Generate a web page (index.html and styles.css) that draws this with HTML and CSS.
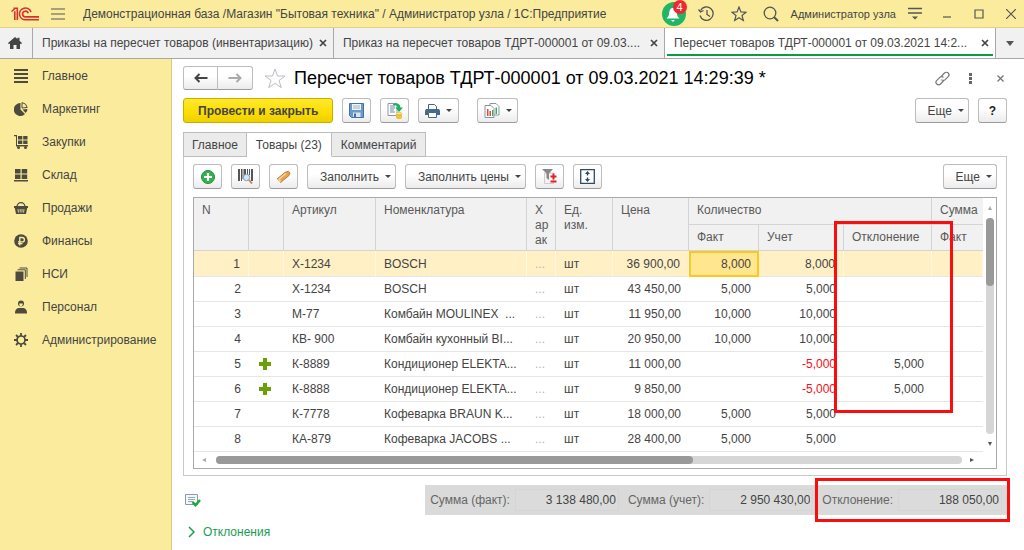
FILE: index.html
```
<!DOCTYPE html>
<html lang="ru">
<head>
    <meta charset="UTF-8">
    <meta name="viewport" content="width=device-width, initial-scale=1.0">
    <title>Пересчет товаров</title>
    <link rel="stylesheet" href="styles.css">
</head>
<body>
<header class="topbar">
    <svg class="logo" width="28" height="14" viewBox="0 0 28 14" fill="none" stroke="#d9302c" stroke-width="1.6">
        <path d="M.5 4.500L3.500 2M3.800 4.300V13M2.500 1.200H6.300V13"/>
        <path d="M20 5A5.900 5.900 0 1 0 14.800 12.800H28"/>
        <path d="M17.300 6.300A2.900 2.900 0 1 0 14.800 9.900H28"/>
    </svg>
    <button class="icon-btn" aria-label="Меню">
        <svg width="14" height="12" viewBox="0 0 14 12" stroke="#555" stroke-width="1.200"><path d="M0 1h14M0 6h14M0 11h14"/></svg>
    </button>
    <div class="app-title">Демонстрационная база /Магазин "Бытовая техника" / Администратор узла / 1С:Предприятие</div>
    <button class="icon-btn bell" aria-label="Уведомления">
        <svg width="24" height="24" viewBox="0 0 24 24"><circle cx="12" cy="12" r="12" fill="#22b565"/><path d="M11 6c-3 0-3.500 2.500-3.800 5-.3 2.500-1 4-2.700 5.500h13c-1.700-1.500-2.400-3-2.700-5.500-.3-2.500-.8-5-3.800-5z" fill="#fff"/><path d="M9 18h4l-2 2z" fill="#fff"/></svg>
        <span class="badge">4</span>
    </button>
    <button class="icon-btn history" aria-label="История">
        <svg width="17" height="16" viewBox="0 0 17 16" fill="none" stroke="#555" stroke-width="1.300"><path d="M2.500 4.500A6.700 6.700 0 1 1 2 9.500M9 4v4.500l3 2"/><path d="M.5 3.500l2 2.500 3-1.500"/></svg>
    </button>
    <button class="icon-btn fav" aria-label="Избранное">
        <svg width="16" height="16" viewBox="0 0 16 16" fill="none" stroke="#555" stroke-width="1.200"><path d="M8 1l1.900 4.900 5.100.3-4 3.300 1.300 5L8 11.700l-4.300 2.800 1.300-5-4-3.300 5.100-.3z"/></svg>
    </button>
    <button class="icon-btn search" aria-label="Поиск">
        <svg width="16" height="16" viewBox="0 0 16 16" fill="none" stroke="#555" stroke-width="1.300"><circle cx="7" cy="7" r="5.800"/><path d="M11 11l4 4" stroke-width="2"/></svg>
    </button>
    <a class="user" href="#">Администратор узла</a>
    <button class="icon-btn settings" aria-label="Настройки">
        <svg width="14" height="13" viewBox="0 0 14 13"><path d="M0 1.500h14M0 6h14" stroke="#555" stroke-width="1.300"/><path d="M4 9.500h6l-3 3z" fill="#555"/></svg>
    </button>
    <button class="icon-btn win-btn" aria-label="Свернуть">
        <svg width="10" height="10" viewBox="0 0 10 10" stroke="#555" stroke-width="1.200"><path d="M1 8h8"/></svg>
    </button>
    <button class="icon-btn win-btn" aria-label="Развернуть">
        <svg width="10" height="10" viewBox="0 0 10 10" fill="none" stroke="#555" stroke-width="1.200"><path d="M1 1h8v8H1z"/></svg>
    </button>
    <button class="icon-btn win-btn" aria-label="Закрыть">
        <svg width="10" height="10" viewBox="0 0 10 10" stroke="#555" stroke-width="1.200"><path d="M0 0l10 10M10 0L0 10"/></svg>
    </button>
</header>

<nav class="windows">
    <a class="home" href="#" aria-label="Начальная страница">
        <svg width="14" height="12" viewBox="0 0 14 12" fill="#444"><path d="M7 0L0 6l1 1.200 1-.8V12h3.500V8h3v4H12V6.400l1 .8L14 6l-2.500-2.200V.8h-2v1.300z"/></svg>
    </a>
    <div class="window">
        <a href="#">Приказы на пересчет товаров (инвентаризацию)</a>
        <button class="icon-btn" aria-label="Закрыть вкладку"><svg width="8" height="8" viewBox="0 0 8 8" stroke="#444" stroke-width="1.700"><path d="M1 1l6 6M7 1L1 7"/></svg></button>
    </div>
    <div class="window grow">
        <a href="#">Приказ на пересчет товаров ТДРТ-000001 от 09.03....</a>
        <button class="icon-btn" aria-label="Закрыть вкладку"><svg width="8" height="8" viewBox="0 0 8 8" stroke="#444" stroke-width="1.700"><path d="M1 1l6 6M7 1L1 7"/></svg></button>
    </div>
    <div class="window grow current">
        <a href="#">Пересчет товаров ТДРТ-000001 от 09.03.2021 14:2...</a>
        <button class="icon-btn" aria-label="Закрыть вкладку"><svg width="8" height="8" viewBox="0 0 8 8" stroke="#444" stroke-width="1.700"><path d="M1 1l6 6M7 1L1 7"/></svg></button>
    </div>
    <button class="icon-btn more-windows" aria-label="Все вкладки">
        <svg width="8" height="5" viewBox="0 0 8 5"><path d="M0 0h8L4 5z" fill="#555"/></svg>
    </button>
</nav>

<div class="layout">
    <!-- разделы -->
    <nav class="sidebar">
        <a href="#"><svg width="14" height="14" viewBox="0 0 14 14" stroke="#4d4b40" stroke-width="1.800"><path d="M0 1h14M0 5h14M0 9h14M0 13h14"/></svg>Главное</a>
        <a href="#"><svg width="14" height="14" viewBox="0 0 14 14" fill="#4d4b40"><path d="M6.500 1A6.500 6.500 0 1 0 11 12L6.500 7.500z"/><path d="M8 .6A6 6 0 0 1 13.200 5.500L8 6z" fill="none" stroke="#4d4b40"/><path d="M8.500 7.500l5-.6a6 6 0 0 1-1.800 4z"/></svg>Маркетинг</a>
        <a href="#"><svg width="14" height="14" viewBox="0 0 14 14" fill="#4d4b40"><path d="M0 0h3v10h11v1.500H2V1.200H0z"/><path d="M4 1h4.300v3.600H4zM9.200 1h4.300v3.600H9.200zM4 5.500h4.300V9H4zM9.200 5.500h4.300V9H9.200z"/><circle cx="4.500" cy="12.500" r="1.500"/><circle cx="11.500" cy="12.500" r="1.500"/></svg>Закупки</a>
        <a href="#"><svg width="14" height="14" viewBox="0 0 14 14" fill="#4d4b40"><path d="M1 1h5.500v4.500H1zM7.700 1h5.500v4.500H7.700zM1 6.500h5.500V11H1zM7.700 6.500h5.500V11H7.700zM0 12h14v1.500H0z"/></svg>Склад</a>
        <a href="#"><svg width="14" height="14" viewBox="0 0 14 14" fill="#4d4b40"><path d="M3 6a4 4.300 0 0 1 8 0" fill="none" stroke="#4d4b40" stroke-width="1.300"/><path d="M0 5h14v2h-.8L12 13H2L.8 7H0z"/><path d="M4 8l.5 3.500M6.200 8v3.500M8 8v3.500M10 8l-.5 3.500" stroke="#fbec9d" stroke-width=".8"/></svg>Продажи</a>
        <a href="#"><svg width="14" height="14" viewBox="0 0 14 14"><circle cx="7" cy="7" r="6.800" fill="#4d4b40"/><path d="M5.800 11.500V3.500h2.400a2.200 2.200 0 0 1 0 4.400H4M4 9.700h4.500" fill="none" stroke="#fbec9d" stroke-width="1.300"/></svg>Финансы</a>
        <a href="#"><svg width="14" height="14" viewBox="0 0 14 14"><path d="M1.500 4.500h8V14h-8z" fill="#4d4b40"/><path d="M3.500 2.800h7.800V12M5.500 1h7.500v9" fill="none" stroke="#4d4b40" stroke-width="1"/></svg>НСИ</a>
        <a href="#"><svg width="14" height="14" viewBox="0 0 14 14" fill="#4d4b40"><circle cx="7" cy="3.500" r="3"/><path d="M5.200 3.500h3.600c0 4-3.600 4-3.600 0z" fill="#fbec9d"/><path d="M1 13.500c0-4 1.500-5 3.500-5.500h5c2 .5 3.500 1.500 3.500 5.500z"/></svg>Персонал</a>
        <a href="#"><svg width="14" height="14" viewBox="0 0 14 14" fill="none" stroke="#4d4b40"><circle cx="7" cy="7" r="4" stroke-width="1.700"/><path d="M7 0v3M7 11v3M0 7h3M11 7h3M2 2l2 2M10 10l2 2M2 12l2-2M10 4l2-2" stroke-width="1.800"/></svg>Администрирование</a>
    </nav>

    <main class="content">
        <div class="heading">
            <div class="nav-buttons">
                <button class="btn" aria-label="Назад"><svg width="14" height="10" viewBox="0 0 14 10" fill="none" stroke="#444" stroke-width="2"><path d="M13.500 5H2M5.500 1L1.500 5l4 4"/></svg></button>
                <button class="btn" aria-label="Вперед"><svg width="14" height="10" viewBox="0 0 14 10" fill="none" stroke="#aaa" stroke-width="2"><path d="M.5 5H12M8.500 1l4 4-4 4"/></svg></button>
            </div>
            <button class="icon-btn star" aria-label="В избранное">
                <svg width="22" height="21" viewBox="0 0 22 21" fill="none" stroke="#b9bcc2" stroke-width="1"><path d="M11 1l2.500 7H21l-6 4.500 2.300 7.200L11 15.300l-6.300 4.400L7 12.500 1 8h7.500z"/></svg>
            </button>
            <h1>Пересчет товаров ТДРТ-000001 от 09.03.2021 14:29:39 *</h1>
            <button class="icon-btn" aria-label="Ссылка">
                <svg width="15" height="15" viewBox="0 0 15 15" fill="none" stroke="#777" stroke-width="1.200"><path d="M6.500 5l3-3a2.600 2.600 0 0 1 3.700 3.700l-3 3a2.600 2.600 0 0 1-3.700 0"/><path d="M8.500 10l-3 3a2.600 2.600 0 0 1-3.700-3.700l3-3a2.600 2.600 0 0 1 3.700 0"/></svg>
            </button>
            <button class="icon-btn" aria-label="Еще"><svg width="3" height="11" viewBox="0 0 3 11" fill="#666"><path d="M0 0h3v3H0zM0 4h3v3H0zM0 8h3v3H0z"/></svg></button>
            <button class="icon-btn close" aria-label="Закрыть"><svg width="7" height="7" viewBox="0 0 7 7" stroke="#777" stroke-width="1.300"><path d="M.5 .5l6 6M6.500 .5l-6 6"/></svg></button>
        </div>

        <div class="toolbar">
            <button class="btn primary">Провести и закрыть</button>
            <button class="btn icon" aria-label="Записать">
                <svg width="15" height="15" viewBox="0 0 15 15"><path d="M.5.5h14v14h-12l-2-2z" fill="#6c9bcb" stroke="#44719f"/><path d="M3 1h9v6H3z" fill="#eef4fa"/><path d="M4 3h7M4 5h7" stroke="#9bb4cc"/><path d="M4 9.500h7.500V14H4z" fill="#dbe4ec"/><path d="M5 10.500h2V14H5z" fill="#3f6f9f"/></svg>
            </button>
            <button class="btn icon" aria-label="Провести">
                <svg width="16" height="16" viewBox="0 0 16 16"><path d="M1 .5h9v12H1z" fill="#fff" stroke="#8999a8"/><path d="M3 3h5M3 5h5M3 7h4M3 9h5" stroke="#70879c"/><path d="M6 1c5-1.500 7 0 7.500 3.500H16L12 9 8.500 4.500h2C10 2.500 9 2 6 2.500z" fill="#19b35b"/><path d="M9 10.500v4c0 2 6 2 6 0v-4z" fill="#edc33b"/><ellipse cx="12" cy="10.500" rx="3" ry="1.200" fill="#ffe98e" stroke="#cfa128" stroke-width=".5"/></svg>
            </button>
            <button class="btn icon menu" aria-label="Печать">
                <svg width="15" height="14" viewBox="0 0 15 14"><path d="M3.500 5V.5h6l2 2V5" fill="#fff" stroke="#4a6684"/><path d="M1 5h13l1 1.500V11H0V6.500z" fill="#47698e"/><path d="M3.500 8.500h8v5h-8z" fill="#fff" stroke="#4a6684"/></svg>
            </button>
            <button class="btn icon menu reports" aria-label="Отчеты">
                <svg width="16" height="15" viewBox="0 0 16 15"><path d="M6 .5h6l3 3V12H6z" fill="#fff" stroke="#8a959f"/><path d="M1 2.500h6l3 3v9H1z" fill="#fff" stroke="#8a959f"/><path d="M3 13V6h1.500v7z" fill="#d94b3f"/><path d="M5.500 13V8H7v5z" fill="#d94b3f"/><path d="M8 13V7h1.300v6zM11.500 11V4.500H13V11z" fill="#3ca85c"/></svg>
            </button>
            <span class="spacer"></span>
            <button class="btn menu">Еще</button>
            <button class="btn icon help">?</button>
        </div>

        <div class="tabs" role="tablist">
            <button role="tab">Главное</button>
            <button role="tab" class="active" aria-selected="true">Товары (23)</button>
            <button role="tab">Комментарий</button>
        </div>

        <section class="panel">
            <div class="toolbar">
                <button class="btn icon" aria-label="Добавить">
                    <svg width="14" height="14" viewBox="0 0 14 14"><circle cx="7" cy="7" r="6.500" fill="#35b04f" stroke="#258c3c"/><path d="M7 3v8M3 7h8" stroke="#fff" stroke-width="2.200"/></svg>
                </button>
                <button class="btn icon" aria-label="Поиск по штрихкоду">
                    <svg width="15" height="15" viewBox="0 0 15 15"><path d="M1 0v12M7 0v8M14 0v12" stroke="#555" stroke-width="2"/><path d="M3.500 0v12M5 0v10M9.500 0v6M11.500 0v6" stroke="#555"/><circle cx="8.500" cy="8.500" r="3.200" fill="#d5e6f5" stroke="#7e9ab4"/><path d="M11 11l3 3.500" stroke="#c9804c" stroke-width="1.800"/></svg>
                </button>
                <button class="btn icon" aria-label="Терминал сбора данных">
                    <svg width="15" height="13" viewBox="0 0 15 13"><path d="M1 9l8-6.500 3.500-1.300L14 3l-1 2.500-8.500 7z" fill="#e2a453" stroke="#bd7c30"/><path d="M3 9l7-5.500" stroke="#f7d7a0" stroke-width="1.500"/><path d="M.5 8.500L4 12.500l1-2.500z" fill="#f5dba8"/></svg>
                </button>
                <button class="btn menu">Заполнить</button>
                <button class="btn menu">Заполнить цены</button>
                <button class="btn icon" aria-label="Отбор">
                    <svg width="15" height="15" viewBox="0 0 15 15"><path d="M2.500 4h9v10.500h-9z" fill="#f3f3f3" stroke="#ccc"/><path d="M0 0h11L7 4.500V11L4.500 9V4.500z" fill="#888"/><path d="M11.500 4.500v6M8.500 7.500h6M8.500 12.500h6" stroke="#e3202a" stroke-width="2"/></svg>
                </button>
                <button class="btn icon" aria-label="Высота строк">
                    <svg width="15" height="15" viewBox="0 0 15 15"><path d="M.7.7h13.600v13.600H.7z" fill="#fff" stroke="#33495c" stroke-width="1.300"/><path d="M7.500 2L10 5H8.200v1.500H6.800V5H5zM7.500 13L10 10H8.200V8.500H6.800V10H5z" fill="#33495c"/></svg>
                </button>
                <span class="spacer"></span>
                <button class="btn menu">Еще</button>
            </div>

            <div class="grid">
                <table class="goods">
                    <colgroup>
                        <col class="w-n"><col class="w-mark"><col class="w-art"><col><col class="w-char"><col class="w-unit">
                        <col class="w-price"><col class="w-fact"><col class="w-acc"><col class="w-dev"><col class="w-sum">
                    </colgroup>
                    <thead>
                    <tr>
                        <th rowspan="2">N</th>
                        <th rowspan="2"></th>
                        <th rowspan="2">Артикул</th>
                        <th rowspan="2">Номенклатура</th>
                        <th rowspan="2">Х<br>ар<br>ак</th>
                        <th rowspan="2">Ед.<br>изм.</th>
                        <th rowspan="2">Цена</th>
                        <th colspan="3">Количество</th>
                        <th>Сумма</th>
                    </tr>
                    <tr>
                        <th>Факт</th>
                        <th>Учет</th>
                        <th>Отклонение</th>
                        <th>Факт</th>
                    </tr>
                    </thead>
                    <tbody>
                    <tr class="selected"><td class="num">1</td><td></td><td>X-1234</td><td>BOSCH</td><td class="dots">...</td><td>шт</td><td class="num">36 900,00</td><td class="num focus">8,000</td><td class="num">8,000</td><td class="num"></td><td></td></tr>
                    <tr><td class="num">2</td><td></td><td>X-1234</td><td>BOSCH</td><td class="dots">...</td><td>шт</td><td class="num">43 450,00</td><td class="num">5,000</td><td class="num">5,000</td><td class="num"></td><td></td></tr>
                    <tr><td class="num">3</td><td></td><td>М-77</td><td>Комбайн MOULINEX &nbsp;...</td><td class="dots">...</td><td>шт</td><td class="num">11 950,00</td><td class="num">10,000</td><td class="num">10,000</td><td class="num"></td><td></td></tr>
                    <tr><td class="num">4</td><td></td><td>КВ- 900</td><td>Комбайн кухонный BI...</td><td class="dots">...</td><td>шт</td><td class="num">20 950,00</td><td class="num">10,000</td><td class="num">10,000</td><td class="num"></td><td></td></tr>
                    <tr><td class="num">5</td><td class="mark"><svg width="14" height="14" viewBox="0 0 14 14"><path d="M7 1v12M1 7h12" stroke="#6aa10a" stroke-width="4"/></svg></td><td>К-8889</td><td>Кондиционер ELEKTA...</td><td class="dots">...</td><td>шт</td><td class="num">11 000,00</td><td></td><td class="num minus">-5,000</td><td class="num">5,000</td><td></td></tr>
                    <tr><td class="num">6</td><td class="mark"><svg width="14" height="14" viewBox="0 0 14 14"><path d="M7 1v12M1 7h12" stroke="#6aa10a" stroke-width="4"/></svg></td><td>К-8888</td><td>Кондиционер ELEKTA...</td><td class="dots">...</td><td>шт</td><td class="num">9 850,00</td><td></td><td class="num minus">-5,000</td><td class="num">5,000</td><td></td></tr>
                    <tr><td class="num">7</td><td></td><td>К-7778</td><td>Кофеварка BRAUN K...</td><td class="dots">...</td><td>шт</td><td class="num">18 000,00</td><td class="num">5,000</td><td class="num">5,000</td><td class="num"></td><td></td></tr>
                    <tr><td class="num">8</td><td></td><td>КА-879</td><td>Кофеварка JACOBS ...</td><td class="dots">...</td><td>шт</td><td class="num">28 400,00</td><td class="num">5,000</td><td class="num">5,000</td><td class="num"></td><td></td></tr>
                    </tbody>
                </table>
                <div class="vscroll">
                    <svg width="4" height="4" viewBox="0 0 4 4"><path d="M0 4h4L2 0z" fill="#aaa"/></svg>
                    <div class="track"><div class="thumb"></div></div>
                    <svg width="4" height="4" viewBox="0 0 4 4"><path d="M0 0h4L2 4z" fill="#555"/></svg>
                </div>
                <div class="hscroll">
                    <svg width="4" height="4" viewBox="0 0 4 4"><path d="M4 0v4L0 2z" fill="#aaa"/></svg>
                    <div class="track"><div class="thumb"></div></div>
                    <svg width="4" height="4" viewBox="0 0 4 4"><path d="M0 0v4l4-2z" fill="#555"/></svg>
                </div>
                <!-- рамка вокруг колонки отклонений -->
                <div class="callout callout-column"></div>
            </div>
        </section>

        <div class="footer">
            <button class="icon-btn" aria-label="Состояние документа">
                <svg width="16" height="13" viewBox="0 0 16 13"><path d="M.5.5h12v10H.5z" fill="#f4f7fa" stroke="#8b9bab"/><path d="M3 3.500h7M3 5.500h7M3 7.500h5" stroke="#9aa9b7"/><path d="M7.500 8l3 3.200L15 6" fill="none" stroke="#19a83c" stroke-width="2.500"/></svg>
            </button>
            <div class="totals">
                <label for="sum-fact">Сумма (факт):</label>
                <input id="sum-fact" type="text" value="3 138 480,00" readonly>
                <label for="sum-acc">Сумма (учет):</label>
                <input id="sum-acc" type="text" value="2 950 430,00" readonly>
                <label for="sum-dev">Отклонение:</label>
                <input id="sum-dev" type="text" value="188 050,00" readonly>
                <div class="callout callout-total"></div>
            </div>
        </div>

        <a class="expand" href="#">
            <svg width="7" height="12" viewBox="0 0 7 12" fill="none" stroke="#1a9c52" stroke-width="1.500"><path d="M1 1l5 5-5 5"/></svg>
            Отклонения
        </a>
    </main>
</div>
</body>
</html>
```
FILE: styles.css
```
* {
    box-sizing: border-box;
    margin: 0;
    padding: 0;
}

body {
    display: flex;
    flex-direction: column;
    min-height: 100vh;
    background: #fff;
    color: #444;
    font: 12px/16px "Liberation Sans", Arial, sans-serif;
}

a {
    color: inherit;
    text-decoration: none;
}

button,
input {
    font: inherit;
    color: inherit;
}

svg {
    display: block;
    flex: none;
}

.icon-btn {
    display: flex;
    flex: none;
    align-items: center;
    justify-content: center;
    border: 0;
    background: none;
}

.spacer {
    flex: 1;
}

/* верхняя панель */
.topbar {
    display: flex;
    align-items: center;
    height: 28px;
    padding: 0 1px 0 11px;
    border-bottom: 1px solid #e0d08a;
    background: #fbec9d;
}

.topbar .logo {
    margin-right: 12px;
}

.app-title {
    flex: 1;
    min-width: 0;
    margin-left: 18px;
    overflow: hidden;
    white-space: nowrap;
}

.bell {
    position: relative;
    height: 27px;
    margin-right: 12px;
}

.badge {
    position: absolute;
    top: 0;
    right: -1px;
    width: 14px;
    height: 14px;
    border-radius: 50%;
    background: #f0282d;
    color: #fff;
    font-size: 11px;
    line-height: 14px;
}

.history,
.fav {
    margin-right: 16px;
}

.search {
    margin-right: 12px;
}

.user {
    margin-right: 12px;
    font-size: 11px;
}

.settings {
    margin-right: 9px;
}

.win-btn {
    width: 32px;
}

.win-btn:last-child {
    width: 24px;
    margin-left: 4px;
}

/* открытые окна */
.windows {
    display: flex;
    height: 31px;
    border-bottom: 1px solid #a8a8a8;
    background: #f1f1f1;
}

.home {
    display: flex;
    align-items: center;
    justify-content: center;
    width: 33px;
    padding-right: 3px;
    border-right: 1px solid #a8a8a8;
}

.window {
    display: flex;
    align-items: center;
    min-width: 0;
    padding: 0 6px 0 9px;
    border-right: 1px solid #a8a8a8;
}

.window a {
    flex: 1;
    overflow: hidden;
    white-space: nowrap;
    text-overflow: ellipsis;
}

.window .icon-btn {
    margin-left: 6px;
}

.grow {
    flex: 1;
}

.current {
    position: relative;
    background: #fff;
}

.current::after {
    content: "";
    position: absolute;
    right: 2px;
    bottom: 2px;
    left: 2px;
    height: 2px;
    background: #0b9a4a;
}

.more-windows {
    width: 28px;
}

.layout {
    display: flex;
    flex: 1;
}

/* разделы */
.sidebar {
    flex: none;
    width: 172px;
    border-right: 1px solid #d8c983;
    background: #fbec9d;
}

.sidebar a {
    display: flex;
    align-items: center;
    gap: 14px;
    height: 33px;
    padding-left: 14px;
}

/* форма документа */
.content {
    flex: 1;
    min-width: 0;
    padding: 7px 17px 8px 11px;
}

.heading {
    display: flex;
    align-items: center;
    height: 24px;
    padding-right: 3px;
}

.heading h1 {
    flex: 1;
    min-width: 0;
    overflow: hidden;
    white-space: nowrap;
    color: #000;
    font-size: 18px;
    font-weight: normal;
    line-height: 24px;
}

.heading .icon-btn + .icon-btn {
    margin-left: 19px;
}

.heading .icon-btn + .close {
    margin-left: 25px;
}

.heading .star {
    margin: 0 8px 0 11px;
}

.nav-buttons {
    display: flex;
}

.btn {
    display: flex;
    flex: none;
    align-items: center;
    justify-content: center;
    height: 25px;
    padding: 0 12px;
    border: 1px solid #bdbdbd;
    border-bottom-color: #9c9c9c;
    border-radius: 3px;
    background: linear-gradient(#fff 40%, #ececec);
}

.nav-buttons .btn {
    width: 35px;
    height: 24px;
    padding: 0;
    border-radius: 3px 0 0 3px;
}

.nav-buttons .btn + .btn {
    border-left: 0;
    border-radius: 0 3px 3px 0;
}

.primary {
    padding: 0 14px;
    border-color: #c9ad00;
    background: linear-gradient(#ffe92e, #fbdd00 60%, #efcf00);
    font-weight: bold;
}

.btn.icon {
    width: 29px;
    padding: 0;
}

.btn.menu {
    padding-right: 4px;
}

.btn.menu::after {
    content: "";
    margin-left: 6px;
    border: 3px solid transparent;
    border-top-color: #444;
    border-bottom: 0;
}

.btn.icon.menu {
    width: 41px;
    padding: 0;
}

.btn.help {
    color: #222;
    font-weight: bold;
}

.toolbar {
    display: flex;
    gap: 9px;
    margin-top: 8px;
}

.toolbar .reports {
    margin-left: 9px;
}

.tabs {
    display: flex;
    margin-top: 9px;
}

.tabs button {
    height: 25px;
    padding: 0 9px;
    border: 1px solid #bdbdbd;
    border-left-width: 0;
    background: #ebebeb;
}

.tabs button:first-child {
    padding: 0 8px;
    border-left-width: 1px;
}

.tabs .active {
    border-bottom-color: #fff;
    background: #fff;
}

.panel {
    margin-top: -1px;
    padding: 7px 9px 6px;
    border: 1px solid #c9c9c9;
}

.panel .toolbar {
    margin: 0 0 8px;
}

/* таблица товаров */
.grid {
    position: relative;
    display: grid;
    grid-template-columns: minmax(0, 1fr) 13px;
    border: 1px solid #a9a9a9;
}

.goods {
    width: 100%;
    table-layout: fixed;
    border-collapse: separate;
    border-spacing: 0;
}

.w-n { width: 55px; }
.w-mark { width: 35px; }
.w-art { width: 92px; }
.w-char { width: 29px; }
.w-unit { width: 57px; }
.w-price { width: 76px; }
.w-fact { width: 70px; }
.w-acc { width: 85px; }
.w-dev { width: 88px; }
.w-sum { width: 51px; }

.goods th {
    height: 26px;
    padding: 5px 0 0 8px;
    border-right: 1px solid #d4d4d4;
    border-bottom: 1px solid #d4d4d4;
    background: #f1f1f1;
    color: #595959;
    font-weight: normal;
    line-height: 15px;
    text-align: left;
    vertical-align: top;
}

.goods tr:first-child th {
    height: 27px;
}

.goods th:last-child {
    border-right: 0;
}

.goods td {
    height: 25px;
    padding: 0 0 0 8px;
    border-bottom: 1px solid #e6e6e6;
    overflow: hidden;
    white-space: nowrap;
}

.goods .num {
    padding: 0 8px 0 0;
    text-align: right;
}

.goods .mark {
    padding-left: 9px;
}

.goods .dots {
    color: #b5b5b5;
}

.goods .minus {
    color: #f01020;
}

.goods .selected td {
    height: 26px;
    border-right: 1px solid #fff8e0;
    background: #fff0c5;
}

.goods .selected .focus {
    padding-right: 6px;
    border: 2px solid #fcc820;
    background: #ffe68f;
}

.vscroll,
.hscroll {
    display: flex;
    align-items: center;
    justify-content: space-between;
}

.vscroll {
    flex-direction: column;
    padding: 8px 0 6px;
}

.hscroll {
    grid-column: 1 / 3;
    height: 16px;
    padding: 0 22px 0 8px;
}

.track {
    flex: 1;
    border-radius: 4px;
    background: #d6d6d6;
}

.thumb {
    border-radius: 4px;
    background: #999;
}

.vscroll .track {
    width: 8px;
    margin: 8px 0;
}

.vscroll .thumb {
    height: 68px;
}

.hscroll .track {
    height: 8px;
    margin: 0 8px 0 10px;
}

.hscroll .thumb {
    width: 64%;
    height: 8px;
}

/* красные рамки */
.callout {
    position: absolute;
    border: 3px solid #fc0d0d;
    pointer-events: none;
}

.callout-column {
    top: 23px;
    right: 43px;
    width: 119px;
    height: 192px;
}

.callout-total {
    top: -7px;
    right: -3px;
    bottom: -7px;
    width: 195px;
}

/* итоги */
.footer {
    display: flex;
    align-items: center;
    justify-content: space-between;
    margin-top: 9px;
    padding-left: 2px;
}

.totals {
    position: relative;
    display: flex;
    align-items: center;
    height: 30px;
    padding: 0 5px;
    background: #dadada;
    color: #666;
}

.totals input {
    width: 104px;
    height: 22px;
    margin: 0 9px 0 5px;
    padding: 0 2px;
    border: 1px solid #d5d5d5;
    border-radius: 2px;
    background: #dbdbdb;
    color: #444;
    text-align: right;
}

.totals input:last-of-type {
    margin-right: 0;
}

.expand {
    display: inline-flex;
    align-items: center;
    gap: 8px;
    margin: 9px 0 0 5px;
    color: #1a9c52;
}
```
